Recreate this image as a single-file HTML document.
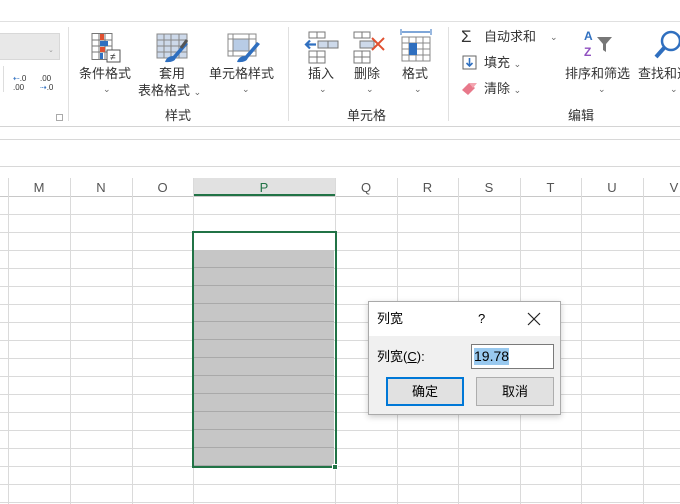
<!DOCTYPE html>
<html><head><meta charset="utf-8"><style>
*{margin:0;padding:0;box-sizing:border-box}
body{width:680px;height:504px;overflow:hidden;background:#fff;position:relative;font-family:"Liberation Sans","Noto Sans CJK SC",sans-serif;color:#333}
.a{position:absolute}
.t{position:absolute;font-size:13px;color:#333;white-space:nowrap;line-height:16px}
.chev{position:absolute;font-size:9px;color:#666}
.vl{position:absolute;width:1px;background:#dadada}
.hl{position:absolute;height:1px;background:#dadada}
.ch{position:absolute;top:178px;height:18px;font-size:13px;color:#555;text-align:center;line-height:19px}
</style></head><body>
<div class="a" style="left:0;top:21px;width:680px;height:1px;background:#e0e0e0"></div>
<div class="a" style="left:0;top:126px;width:680px;height:1px;background:#d4d4d4"></div>
<div class="a" style="left:0;top:33px;width:60px;height:27px;background:#e8e8e8;border:1px solid #d8d8d8;border-left:none"></div>
<div class="a" style="left:48px;top:46px;font-size:7px;color:#999">⌄</div>
<div class="a" style="left:3px;top:66px;width:1px;height:26px;background:#ddd"></div>
<div class="t" style="left:13px;top:74px;font-size:8px;line-height:9px;color:#333"><span style="color:#3070c0">⇠</span>.0<br>.00</div>
<div class="t" style="left:40px;top:74px;font-size:8px;line-height:9px;color:#333">.00<br><span style="color:#3070c0">⇢</span>.0</div>
<div class="a" style="left:56px;top:114px;width:7px;height:7px;border:1px solid #aaa"></div>
<div class="a" style="left:68px;top:27px;width:1px;height:94px;background:#e0e0e0"></div>
<div class="a" style="left:288px;top:27px;width:1px;height:94px;background:#e0e0e0"></div>
<div class="a" style="left:448px;top:27px;width:1px;height:94px;background:#e0e0e0"></div>
<svg class="a" style="left:90px;top:32px" width="32" height="32"><g fill="none" stroke="#777"><rect x="2" y="1.5" width="20" height="26"/><path d="M2 8h20M2 14h20M2 20h20M9 1v27M15 1v27"/></g><rect x="10" y="2" width="4" height="6" fill="#e05030"/><rect x="10" y="9" width="8" height="5" fill="#3070c0"/><rect x="10" y="15" width="5" height="5" fill="#e05030"/><rect x="10" y="21" width="3" height="6" fill="#3070c0"/><rect x="17" y="18" width="13" height="12" fill="#fff" stroke="#555"/><text x="20" y="28" font-size="10" fill="#333">≠</text></svg>
<svg class="a" style="left:155px;top:32px" width="36" height="32"><g fill="#cdd9ea"><rect x="2" y="2" width="30" height="24"/></g><g fill="none" stroke="#888"><rect x="2" y="2" width="30" height="24"/><path d="M2 8h30M2 14h30M2 20h30M9 2v24M16 2v24M24 2v24"/></g><path d="M10 30 q2-6 8-6 l12-14 l3 2 -12 14 q-2 5-11 4z" fill="#2f6fbf"/><path d="M26 16 l6-8" stroke="#555" stroke-width="3"/></svg>
<svg class="a" style="left:226px;top:32px" width="36" height="32"><rect x="2" y="2" width="28" height="22" fill="#fff" stroke="#888"/><rect x="7" y="7" width="16" height="12" fill="#b8cce6"/><path d="M2 7h28M2 19h28M7 2v22M23 2v22" stroke="#888" fill="none"/><path d="M11 30 q2-6 8-6 l12-14 l3 2 -12 14 q-2 5-11 4z" fill="#2f6fbf"/></svg>
<div class="t" style="left:79px;top:66px">条件格式</div>
<div class="chev" style="left:103px;top:84px">⌄</div>
<div class="t" style="left:159px;top:66px">套用</div>
<div class="t" style="left:138px;top:83px">表格格式 <span style="font-size:9px;color:#666">⌄</span></div>
<div class="t" style="left:209px;top:66px">单元格样式</div>
<div class="chev" style="left:242px;top:84px">⌄</div>
<div class="t" style="left:165px;top:108px">样式</div>
<svg class="a" style="left:304px;top:30px" width="36" height="34"><g fill="none" stroke="#777"><rect x="5" y="2" width="16" height="6"/><path d="M13 2v6"/><rect x="14" y="11" width="20" height="7" fill="#cdd9ea"/><path d="M24 11v7"/><rect x="5" y="21" width="16" height="12"/><path d="M5 27h16M13 21v12"/></g><path d="M12 14.5h-10M6 10.5l-4 4 4 4" stroke="#3070c0" stroke-width="2.2" fill="none"/></svg>
<svg class="a" style="left:352px;top:30px" width="36" height="34"><g fill="none" stroke="#777"><rect x="2" y="2" width="16" height="6"/><path d="M10 2v6"/><rect x="8" y="11" width="14" height="7" fill="#cdd9ea"/><rect x="2" y="21" width="16" height="12"/><path d="M2 27h16M10 21v12"/></g><path d="M20 8l12 12M32 8l-12 12" stroke="#e05030" stroke-width="2"/></svg>
<svg class="a" style="left:399px;top:28px" width="34" height="36"><path d="M3 4h28" stroke="#3070c0" stroke-width="1.3"/><path d="M2 1v6M32 1v6" stroke="#3070c0"/><g fill="none" stroke="#888"><rect x="3" y="9" width="28" height="24"/><path d="M3 15h28M3 21h28M3 27h28M10 9v24M17 9v24M24 9v24"/></g><rect x="10" y="15" width="8" height="12" fill="#2f6fbf"/></svg>
<div class="t" style="left:308px;top:66px">插入</div>
<div class="chev" style="left:319px;top:84px">⌄</div>
<div class="t" style="left:354px;top:66px">删除</div>
<div class="chev" style="left:366px;top:84px">⌄</div>
<div class="t" style="left:402px;top:66px">格式</div>
<div class="chev" style="left:414px;top:84px">⌄</div>
<div class="t" style="left:347px;top:108px">单元格</div>
<div class="t" style="left:461px;top:27px;font-size:17px;line-height:20px">Σ</div>
<div class="t" style="left:484px;top:29px">自动求和</div>
<div class="chev" style="left:550px;top:32px">⌄</div>
<svg class="a" style="left:462px;top:55px" width="15" height="15"><rect x="1" y="1" width="13" height="13" fill="#fff" stroke="#666"/><path d="M7.5 3v8M4.5 8l3 3 3-3" stroke="#3070c0" stroke-width="1.6" fill="none"/></svg>
<div class="t" style="left:484px;top:55px">填充 <span style="font-size:9px;color:#666">⌄</span></div>
<svg class="a" style="left:461px;top:81px" width="18" height="14"><path d="M1 9l7-7 6 5-7 7z" fill="#e8788a"/><path d="M8 2l8 0-4 5z" fill="#f3a5b0"/></svg>
<div class="t" style="left:484px;top:81px">清除 <span style="font-size:9px;color:#666">⌄</span></div>
<div class="t" style="left:584px;top:28px;font-size:12px;color:#3070c0;font-weight:bold">A</div>
<div class="t" style="left:584px;top:44px;font-size:12px;color:#9050c0;font-weight:bold">Z</div>
<svg class="a" style="left:595px;top:34px" width="20" height="20"><path d="M2 3h15l-6 7v8l-3-2v-6z" fill="#777"/></svg>
<div class="t" style="left:565px;top:66px">排序和筛选</div>
<div class="chev" style="left:598px;top:84px">⌄</div>
<svg class="a" style="left:654px;top:28px" width="26" height="36"><circle cx="17" cy="13" r="9" fill="none" stroke="#2f6fbf" stroke-width="2.5"/><path d="M10 20l-8 9" stroke="#2f6fbf" stroke-width="4"/></svg>
<div class="t" style="left:638px;top:66px">查找和选</div>
<div class="chev" style="left:670px;top:84px">⌄</div>
<div class="t" style="left:568px;top:108px">编辑</div>
<div class="a" style="left:0;top:139px;width:680px;height:1px;background:#d8d8d8"></div>
<div class="a" style="left:0;top:166px;width:680px;height:1px;background:#d8d8d8"></div>
<div class="a" style="left:193px;top:178px;width:142px;height:18px;background:#e1e1e1"></div>
<div class="a" style="left:193px;top:194px;width:142px;height:2px;background:#217346"></div>
<div class="hl" style="left:0;top:196px;width:680px;background:#c8c8c8"></div>
<div class="vl" style="left:8px;top:178px;height:326px"></div>
<div class="vl" style="left:70px;top:178px;height:326px"></div>
<div class="vl" style="left:132px;top:178px;height:326px"></div>
<div class="vl" style="left:193px;top:178px;height:326px"></div>
<div class="vl" style="left:335px;top:178px;height:326px"></div>
<div class="vl" style="left:397px;top:178px;height:326px"></div>
<div class="vl" style="left:458px;top:178px;height:326px"></div>
<div class="vl" style="left:520px;top:178px;height:326px"></div>
<div class="vl" style="left:581px;top:178px;height:326px"></div>
<div class="vl" style="left:643px;top:178px;height:326px"></div>
<div class="hl" style="left:0;top:214px;width:680px"></div><div class="hl" style="left:0;top:232px;width:680px"></div>
<div class="hl" style="left:0;top:250px;width:680px"></div><div class="hl" style="left:0;top:268px;width:680px"></div>
<div class="hl" style="left:0;top:286px;width:680px"></div><div class="hl" style="left:0;top:304px;width:680px"></div>
<div class="hl" style="left:0;top:322px;width:680px"></div><div class="hl" style="left:0;top:340px;width:680px"></div>
<div class="hl" style="left:0;top:358px;width:680px"></div><div class="hl" style="left:0;top:376px;width:680px"></div>
<div class="hl" style="left:0;top:394px;width:680px"></div><div class="hl" style="left:0;top:412px;width:680px"></div>
<div class="hl" style="left:0;top:430px;width:680px"></div><div class="hl" style="left:0;top:448px;width:680px"></div>
<div class="hl" style="left:0;top:466px;width:680px"></div><div class="hl" style="left:0;top:484px;width:680px"></div>
<div class="hl" style="left:0;top:502px;width:680px"></div>
<div class="ch" style="left:8px;width:62px">M</div><div class="ch" style="left:70px;width:62px">N</div>
<div class="ch" style="left:132px;width:61px">O</div><div class="ch" style="left:193px;width:142px;color:#217346">P</div>
<div class="ch" style="left:335px;width:62px">Q</div><div class="ch" style="left:397px;width:61px">R</div>
<div class="ch" style="left:458px;width:62px">S</div><div class="ch" style="left:520px;width:61px">T</div>
<div class="ch" style="left:581px;width:62px">U</div><div class="ch" style="left:643px;width:62px">V</div>
<div class="a" style="left:194px;top:250px;width:140px;height:216px;background:repeating-linear-gradient(#c6c6c6 0 17px,#a9a9a9 17px 18px)"></div>
<div class="a" style="left:192px;top:231px;width:145px;height:237px;border:2px solid #217346"></div>
<div class="a" style="left:332px;top:464px;width:6px;height:6px;background:#217346;border:1px solid #fff"></div>
<div class="a" style="left:368px;top:301px;width:193px;height:114px;background:#f0f0f0;border:1px solid #aaa;box-shadow:0 2px 6px rgba(0,0,0,.2)">
 <div class="a" style="left:0;top:0;width:191px;height:34px;background:#fff"></div>
 <div class="t" style="left:8px;top:9px;color:#000">列宽</div>
 <div class="t" style="left:109px;top:9px;color:#000">?</div>
 <svg class="a" style="left:158px;top:10px" width="14" height="14"><path d="M1 1l12 12M13 1l-12 12" stroke="#222" stroke-width="1.2"/></svg>
 <div class="t" style="left:8px;top:47px;color:#000">列宽(<u>C</u>):</div>
 <div class="a" style="left:102px;top:42px;width:83px;height:25px;background:#fff;border:1px solid #7a7a7a"></div>
 <div class="t" style="left:105px;top:46px;color:#000;background:#99c9ef;font-size:14px;line-height:17px">19.78</div>
 <div class="a" style="left:17px;top:75px;width:78px;height:29px;background:#e1e1e1;border:2px solid #0078d7;font-size:13px;color:#000;text-align:center;line-height:25px">确定</div>
 <div class="a" style="left:107px;top:75px;width:78px;height:29px;background:#e1e1e1;border:1px solid #adadad;font-size:13px;color:#000;text-align:center;line-height:27px">取消</div>
</div>
</body></html>
